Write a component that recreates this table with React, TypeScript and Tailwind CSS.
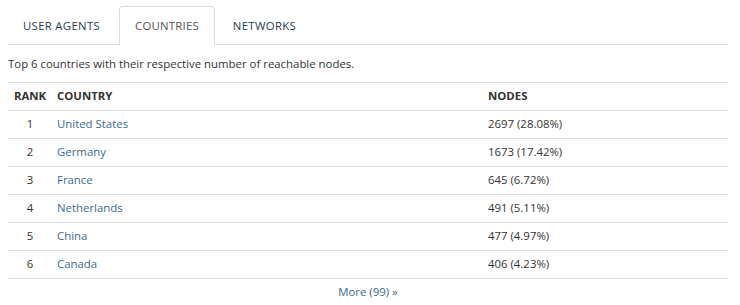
import React from "react";

const rows = [
  { rank: 1, country: "United States", nodes: "2697 (28.08%)" },
  { rank: 2, country: "Germany", nodes: "1673 (17.42%)" },
  { rank: 3, country: "France", nodes: "645 (6.72%)" },
  { rank: 4, country: "Netherlands", nodes: "491 (5.11%)" },
  { rank: 5, country: "China", nodes: "477 (4.97%)" },
  { rank: 6, country: "Canada", nodes: "406 (4.23%)" },
];

export default function App() {
  return (
    <div className="bg-white w-[740px] h-[305px] px-2 pt-[6px]">
      <div
        className="w-[720px] text-[11.4px] text-[#333]"
        style={{ fontFamily: '"Open Sans", "Noto Sans", sans-serif' }}
      >
        <ul className="flex border-b border-[#ddd] h-[39px]">
          <li className="mr-[2px]">
            <a className="block pl-[14px] pr-[16px] py-[10px] leading-[18px] tracking-[0.3px] border border-transparent text-[#2c3e50]">
              USER AGENTS
            </a>
          </li>
          <li className="mr-[2px] -mb-px">
            <a className="block px-[15px] py-[10px] leading-[18px] tracking-[0.2px] border border-[#ddd] border-b-white rounded-t-[4px] bg-white text-[#555]">
              COUNTRIES
            </a>
          </li>
          <li>
            <a className="block px-[15px] py-[10px] leading-[18px] tracking-[0.3px] border border-transparent text-[#2c3e50]">
              NETWORKS
            </a>
          </li>
        </ul>
        <p className="pt-[10px] pb-[10px] leading-[17px]">
          Top 6 countries with their respective number of reachable nodes.
        </p>
        <table className="w-full border-collapse">
          <thead>
            <tr className="border-t border-b border-[#ddd] h-[28px]">
              <th className="w-[44px] text-center font-bold px-[5px] pb-[1px] leading-[16px]">RANK</th>
              <th className="w-[431px] text-left font-bold px-[5px] pb-[1px] leading-[16px]">COUNTRY</th>
              <th className="text-left font-bold px-[5px] pb-[1px] leading-[16px]">NODES</th>
            </tr>
          </thead>
          <tbody>
            {rows.map((r) => (
              <tr key={r.rank} className="border-b border-[#ddd] h-[28px]">
                <td className="text-center px-[5px] pb-[1px] leading-[16px]">{r.rank}</td>
                <td className="px-[5px] pb-[1px] leading-[16px]">
                  <a className="text-[#3a6b8e]">{r.country}</a>
                </td>
                <td className="px-[5px] pb-[1px] leading-[16px]">{r.nodes}</td>
              </tr>
            ))}
          </tbody>
        </table>
        <div className="text-center leading-[17px] pt-[4px] text-[#3a6b8e]">More (99) »</div>
      </div>
    </div>
  );
}
